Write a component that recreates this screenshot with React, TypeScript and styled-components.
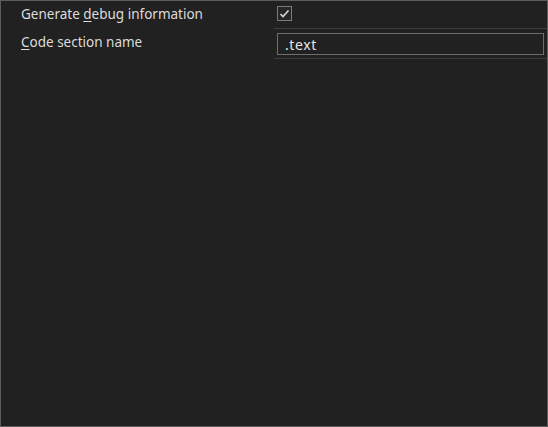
import styled, { createGlobalStyle } from "styled-components";

const GlobalStyle = createGlobalStyle`
  html, body {
    margin: 0;
    padding: 0;
    background: #1f1f1f;
  }
  body {
    font-family: "Noto Sans", "Open Sans", sans-serif;
    font-size: 13.5px;
  }
`;

const Panel = styled.div`
  box-sizing: border-box;
  width: 548px;
  height: 427px;
  border: 1px solid #5c5c5c;
  background: #212121;
  color: #dcdcdc;
`;

const Grid = styled.div`
  display: grid;
  grid-template-columns: 273px 1fr;
`;

const Label = styled.div<{ $h: number }>`
  height: ${(p) => p.$h}px;
  padding: 4px 0 0 20px;
  box-sizing: border-box;
  white-space: nowrap;

  u {
    text-decoration-thickness: 1px;
    text-underline-offset: 2px;
  }
`;

const Value = styled.div<{ $h: number; $top: number }>`
  height: ${(p) => p.$h}px;
  box-sizing: border-box;
  padding: ${(p) => p.$top}px 3px 0 3px;
  border-bottom: 1px solid #3c3c3c;
`;

const CheckBox = styled.span`
  display: flex;
  align-items: center;
  justify-content: center;
  width: 15px;
  height: 15px;
  box-sizing: border-box;
  border: 1px solid #7a7a7a;
  background: #262626;

  svg {
    display: block;
  }
`;

const TextInput = styled.input`
  display: block;
  box-sizing: border-box;
  width: 100%;
  height: 22px;
  margin: 0;
  padding: 0 6px 0 7px;
  border: 1px solid #6e6e6e;
  background: #212121;
  color: #e6e6e6;
  font-family: "Noto Sans", "Open Sans", sans-serif;
  font-size: 14px;
  letter-spacing: 0.6px;
  outline: none;
`;

export default function App() {
  return (
    <>
      <GlobalStyle />
      <Panel>
        <Grid>
          <Label $h={28}>
            Generate <u>d</u>ebug information
          </Label>
          <Value $h={28} $top={5}>
            <CheckBox>
              <svg width="11" height="11" viewBox="0 0 11 11">
                <polyline
                  points="1.5,6 4,8.5 9.5,2.5"
                  fill="none"
                  stroke="#d8d8d8"
                  strokeWidth="1.6"
                />
              </svg>
            </CheckBox>
          </Value>
          <Label $h={30}>
            <u>C</u>ode section name
          </Label>
          <Value $h={30} $top={4}>
            <TextInput defaultValue=".text" />
          </Value>
        </Grid>
      </Panel>
    </>
  );
}
